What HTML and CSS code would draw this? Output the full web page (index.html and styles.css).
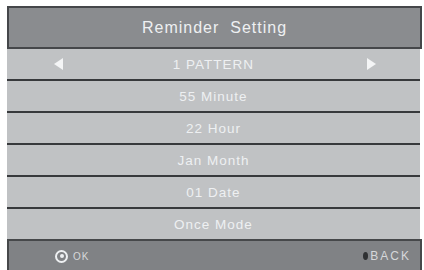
FILE: index.html
```html
<!DOCTYPE html>
<html>
<head>
<meta charset="utf-8">
<link rel="stylesheet" href="styles.css">
</head>
<body>
<div class="screen">
  <div class="header">Reminder&nbsp; Setting</div>
  <div class="rows">
    <div class="row sel">
      <span class="arrow left"></span>
      <span class="label">1 PATTERN</span>
      <span class="arrow right"></span>
    </div>
    <div class="row"><span class="label">55 Minute</span></div>
    <div class="row"><span class="label">22 Hour</span></div>
    <div class="row"><span class="label">Jan Month</span></div>
    <div class="row"><span class="label">01 Date</span></div>
    <div class="row last"><span class="label">Once Mode</span></div>
  </div>
  <div class="footer">
    <div class="ok"><span class="ring"></span><span class="ftext">OK</span></div>
    <div class="back"><span class="dot"></span><span class="ftext">BACK</span></div>
  </div>
</div>
</body>
</html>
```
FILE: styles.css
```css
html, body {
  margin: 0;
  padding: 0;
  background: #ffffff;
  width: 424px;
  height: 270px;
  overflow: hidden;
}
.screen {
  margin: 6px 0 0 7px;
  width: 415px;
  display: flex;
  flex-direction: column;
  font-family: "Liberation Sans", Arial, sans-serif;
}
.header {
  height: 38px;
  border: 2px solid #45474a;
  background: #8a8c8f;
  color: #eef0f2;
  font-size: 16px;
  letter-spacing: 1px;
  display: flex;
  align-items: center;
  justify-content: center;
  padding-top: 1px;
  box-sizing: content-box;
}
.rows {
  width: 413px;
  display: flex;
  flex-direction: column;
  background: #c0c2c4;
}
.row {
  height: 30px;
  border-bottom: 2px solid #37393c;
  display: flex;
  align-items: center;
  justify-content: center;
  position: relative;
  color: #eef0f2;
  font-size: 13.5px;
  letter-spacing: 1px;
}
.row.last {
  border-bottom: none;
  height: 30px;
}
.arrow {
  position: absolute;
  top: 9px;
  width: 0;
  height: 0;
  border-top: 6px solid transparent;
  border-bottom: 6px solid transparent;
}
.arrow.left {
  left: 47px;
  border-right: 9px solid #f4f5f6;
}
.arrow.right {
  left: 360px;
  border-left: 9px solid #f4f5f6;
}
.footer {
  height: 30px;
  border: 2px solid #46484a;
  border-bottom: none;
  background: #808285;
  display: flex;
  align-items: center;
  justify-content: space-between;
  padding: 0 9px 0 46px;
}
.ok, .back {
  display: flex;
  align-items: center;
}
.ring {
  width: 9px;
  height: 9px;
  border: 2px solid #eef0f2;
  border-radius: 50%;
  position: relative;
  box-sizing: content-box;
  margin-right: 5px;
}
.ring::after {
  content: "";
  position: absolute;
  left: 2.5px;
  top: 2.5px;
  width: 4px;
  height: 4px;
  border-radius: 50%;
  background: #eef0f2;
}
.dot {
  width: 5px;
  height: 8px;
  border-radius: 50%;
  background: #2f3133;
  margin-right: 2px;
}
.ftext {
  color: #d6d8da;
  font-size: 10px;
  letter-spacing: 1px;
}
.back .ftext {
  font-size: 12px;
  letter-spacing: 2px;
}
```
